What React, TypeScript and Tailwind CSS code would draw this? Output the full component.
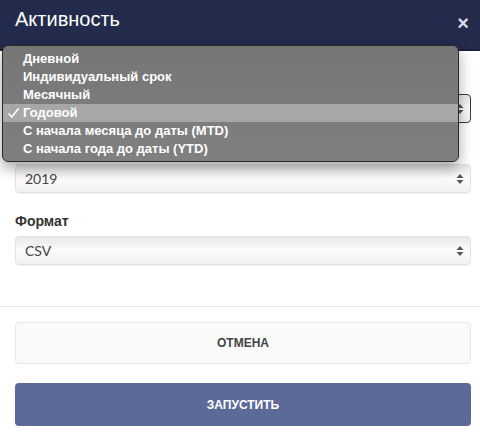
import React from "react";

const Arrows = ({ color = "#555" }: { color?: string }) => (
  <svg width="8" height="12" viewBox="0 0 8 12">
    <path d="M4 1 L7.5 5 L0.5 5 Z" fill={color} />
    <path d="M4 11 L7.5 7 L0.5 7 Z" fill={color} />
  </svg>
);

const Select = ({ value, dark = false }: { value: string; dark?: boolean }) => (
  <div
    className={
      "h-[29px] rounded-[4px] border flex items-center justify-between pl-[9px] pr-[6px] bg-gradient-to-b from-[#e8e8e8] via-[#fbfbfb] to-[#f2f2f2] shadow-[0_1px_1px_rgba(0,0,0,0.05)] " +
      (dark ? "border-[#3a3a3a]" : "border-[#e2e2e2]")
    }
  >
    <span className="text-[14px] text-[#444]" style={{ fontFamily: "Lato, 'Open Sans', sans-serif" }}>
      {value}
    </span>
    <Arrows />
  </div>
);

const items = [
  "Дневной",
  "Индивидуальный срок",
  "Месячный",
  "Годовой",
  "С начала месяца до даты (MTD)",
  "С начала года до даты (YTD)",
];

export default function App() {
  return (
    <div
      className="relative w-[480px] h-[436px] bg-white overflow-hidden"
      style={{ fontFamily: "'Liberation Sans', Arial, sans-serif" }}
    >
      <div className="h-[51px] bg-[#222b4c] flex items-center justify-between pl-[15px] pr-[11px] border-b-[2px] border-[#1a2140]">
        <span className="text-white text-[20px] leading-none -mt-[12px]">Активность</span>
        <span className="text-[#dcdde4] text-[20px] font-bold leading-none -mt-[4px]">×</span>
      </div>

      <div className="pl-[15px] pr-[9px] flex flex-col">
        <div className="mt-[43px]">
          <Select value="" dark />
        </div>
        <div className="h-[20px] mt-[7px]" />
        <div className="mt-[14px]">
          <Select value="2019" />
        </div>
        <div className="mt-[21px] mb-[8px] text-[14px] font-bold text-[#333] leading-[14px]">Формат</div>
        <Select value="CSV" />
      </div>

      <div className="mt-[41px] border-t border-[#e6e6e6]" />

      <div className="pl-[15px] pr-[9px] pt-[15px] flex flex-col gap-[19px]">
        <button className="h-[42px] rounded-[4px] border border-[#e6e6e6] bg-[#fafafa] text-[12px] font-bold text-[#444]">
          ОТМЕНА
        </button>
        <button className="h-[43px] rounded-[4px] bg-[#5b6a99] text-[12px] font-bold text-white">
          ЗАПУСТИТЬ
        </button>
      </div>

      <div className="absolute left-[2px] top-[45px] w-[457px] h-[117px] rounded-[6px] border border-[#2a2a2a] bg-gradient-to-b from-[#767676] to-[#808080] shadow-[0_6px_14px_rgba(0,0,0,0.35)] pt-[4px]">
        {items.map((t, i) => (
          <div
            key={t}
            className={
              "relative h-[18px] flex items-center pl-[20px] text-[13px] font-bold text-white " +
              (i === 3 ? "bg-[#a7a7a7]" : "")
            }
          >
            {i === 3 && (
              <span className="absolute left-[4px] top-0 h-[18px] flex items-center">
                <svg width="13" height="12" viewBox="0 0 13 12">
                  <path d="M1.5 6.5 L4.8 10 L11.5 1.5" fill="none" stroke="white" strokeWidth="1.6" />
                </svg>
              </span>
            )}
            {t}
          </div>
        ))}
      </div>
    </div>
  );
}
